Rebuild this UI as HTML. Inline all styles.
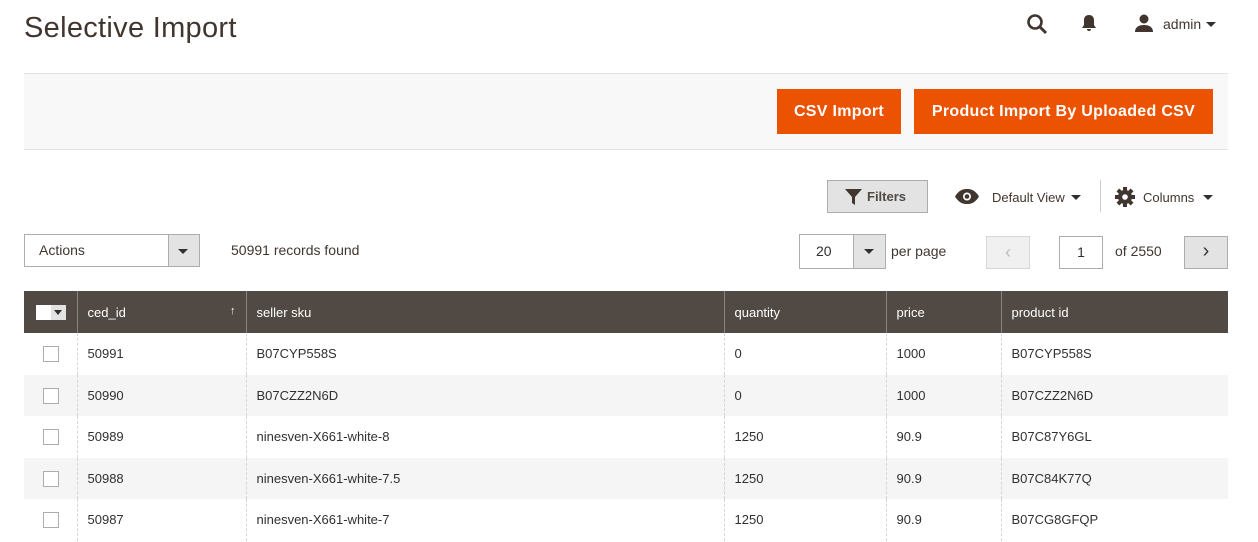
<!DOCTYPE html>
<html><head><style>
*{box-sizing:border-box;margin:0;padding:0}
body{width:1258px;height:542px;overflow:hidden;background:#fff;font-family:"Liberation Sans",sans-serif;color:#303030;position:relative}
.a{position:absolute}
h1{position:absolute;left:24px;top:12px;font-size:29px;font-weight:400;color:#41362f;letter-spacing:.3px}
.bar{left:24px;top:73px;width:1204px;height:77px;background:#f8f8f8;border-top:1px solid #e3e3e3;border-bottom:1px solid #e3e3e3}
.btn{background:#eb5202;color:#fff;font-weight:bold;font-size:16px;height:45px;line-height:45px;text-align:center;letter-spacing:.3px}
table{position:absolute;left:24px;top:291px;width:1204px;border-collapse:collapse;font-size:13px}
th{background:#514943;color:#fff;font-weight:normal;text-align:left;height:42px;padding-left:10px;border-left:1px solid #8a837f}
th:first-child{border-left:none}
td{height:41.5px;padding-left:10px;border-left:1px dashed #d6d6d6;color:#303030}
td:first-child{border-left:none;padding-left:19px}
tr:nth-child(odd) td{background:#f5f5f5}
.cb{display:inline-block;width:16px;height:16px;border:1px solid #adadad;background:#fff;vertical-align:middle}
.tri{display:inline-block;width:0;height:0;border-left:5px solid transparent;border-right:5px solid transparent;border-top:5px solid #303030}
</style></head><body>
<h1>Selective Import</h1>
<svg class="a" style="left:1026px;top:13px" width="22" height="22" viewBox="0 0 22 22"><circle cx="9" cy="9" r="6.5" fill="none" stroke="#41362f" stroke-width="2.6"/><path d="M14 14l6 6" stroke="#41362f" stroke-width="3"/></svg>
<svg class="a" style="left:1081px;top:14px" width="16" height="19" viewBox="0 0 16 19"><path d="M8 1c-3 0-5 2-5 5v5l-2 3h14l-2-3V6c0-3-2-5-5-5z M6 15h4a2 2 0 0 1-4 0z" fill="#41362f"/></svg>
<svg class="a" style="left:1134px;top:13px" width="20" height="20" viewBox="0 0 20 20"><circle cx="10" cy="6" r="4.5" fill="#41362f"/><path d="M1 19c0-5 4-7 9-7s9 2 9 7z" fill="#41362f"/></svg>
<div class="a" style="left:1163px;top:16px;font-size:14px;color:#41362f">admin</div>
<span class="a tri" style="left:1206px;top:22px"></span>
<div class="a bar"></div>
<div class="a btn" style="left:777px;top:89px;width:124px">CSV Import</div>
<div class="a btn" style="left:914px;top:89px;width:299px">Product Import By Uploaded CSV</div>
<div class="a" style="left:827px;top:180px;width:101px;height:33px;background:#e3e3e3;border:1px solid #adadad;font-size:13px;font-weight:bold;color:#514943;line-height:31px;padding-left:39px">Filters</div>
<svg class="a" style="left:845px;top:189px" width="17" height="16" viewBox="0 0 17 16"><path d="M0 0h17L10 8v8l-3-2V8z" fill="#41362f"/></svg>
<svg class="a" style="left:955px;top:189px" width="24" height="15" viewBox="0 0 24 15"><path d="M0 7.5C4 1 8 0 12 0s8 1 12 7.5C20 14 16 15 12 15S4 14 0 7.5z" fill="#41362f"/><circle cx="12" cy="7.5" r="4" fill="#fff"/><circle cx="12" cy="7.5" r="2.3" fill="#41362f"/></svg>
<div class="a" style="left:992px;top:190px;font-size:13px;color:#41362f">Default View</div>
<span class="a tri" style="left:1071px;top:195px"></span>
<div class="a" style="left:1100px;top:180px;width:1px;height:32px;background:#ccc"></div>
<svg class="a" style="left:1115px;top:187px" width="20" height="20" viewBox="0 0 20 20"><g fill="#41362f"><circle cx="10" cy="10" r="7"/><rect x="8" y="0" width="4" height="20"/><rect x="0" y="8" width="20" height="4"/><rect x="8" y="0" width="4" height="20" transform="rotate(45 10 10)"/><rect x="8" y="0" width="4" height="20" transform="rotate(-45 10 10)"/></g><circle cx="10" cy="10" r="2.8" fill="#fff"/></svg>
<div class="a" style="left:1143px;top:190px;font-size:13px;color:#41362f">Columns</div>
<span class="a tri" style="left:1203px;top:195px"></span>
<div class="a" style="left:24px;top:234px;width:176px;height:33px;border:1px solid #adadad;font-size:14px;line-height:31px;padding-left:14px;color:#41362f">Actions</div>
<div class="a" style="left:168px;top:235px;width:31px;height:31px;background:#e3e3e3;border-left:1px solid #adadad"></div>
<span class="a tri" style="left:178px;top:249px"></span>
<div class="a" style="left:231px;top:242px;font-size:14px;color:#41362f">50991 records found</div>
<div class="a" style="left:799px;top:234px;width:87px;height:35px;border:1px solid #adadad;font-size:14px;line-height:33px;padding-left:16px;color:#303030">20</div>
<div class="a" style="left:853px;top:235px;width:32px;height:33px;background:#e3e3e3;border-left:1px solid #adadad"></div>
<span class="a tri" style="left:864px;top:249px"></span>
<div class="a" style="left:891px;top:243px;font-size:14px;color:#41362f">per page</div>
<div class="a" style="left:986px;top:236px;width:44px;height:33px;background:#f0f0f0;border:1px solid #d6d6d6;color:#bbb;text-align:center;line-height:30px;font-size:18px">&#8249;</div>
<div class="a" style="left:1059px;top:236px;width:44px;height:33px;border:1px solid #adadad;text-align:center;line-height:31px;font-size:14px">1</div>
<div class="a" style="left:1115px;top:243px;font-size:14px;color:#41362f">of 2550</div>
<div class="a" style="left:1184px;top:236px;width:44px;height:33px;background:#e3e3e3;border:1px solid #adadad;text-align:center;line-height:29px;font-size:20px;color:#41362f">&#8250;</div>
<table>
<colgroup><col style="width:53px"><col style="width:169px"><col style="width:478px"><col style="width:162px"><col style="width:115px"><col></colgroup>
<tr><th style="padding-left:12px"><span class="cb" style="width:15px;height:15px;border:none"></span><span style="display:inline-block;width:15px;height:15px;background:#e3e3e3;vertical-align:middle;position:relative"><span class="tri" style="position:absolute;left:3px;top:5px;border-left-width:4px;border-right-width:4px"></span></span></th><th>ced_id<span style="float:right;margin-right:10px;font-size:11px">&#8593;</span></th><th>seller sku</th><th>quantity</th><th>price</th><th>product id</th></tr>
<tr><td><span class="cb"></span></td><td>50991</td><td>B07CYP558S</td><td>0</td><td>1000</td><td>B07CYP558S</td></tr>
<tr><td><span class="cb"></span></td><td>50990</td><td>B07CZZ2N6D</td><td>0</td><td>1000</td><td>B07CZZ2N6D</td></tr>
<tr><td><span class="cb"></span></td><td>50989</td><td>ninesven-X661-white-8</td><td>1250</td><td>90.9</td><td>B07C87Y6GL</td></tr>
<tr><td><span class="cb"></span></td><td>50988</td><td>ninesven-X661-white-7.5</td><td>1250</td><td>90.9</td><td>B07C84K77Q</td></tr>
<tr><td><span class="cb"></span></td><td>50987</td><td>ninesven-X661-white-7</td><td>1250</td><td>90.9</td><td>B07CG8GFQP</td></tr>
</table>
</body></html>
